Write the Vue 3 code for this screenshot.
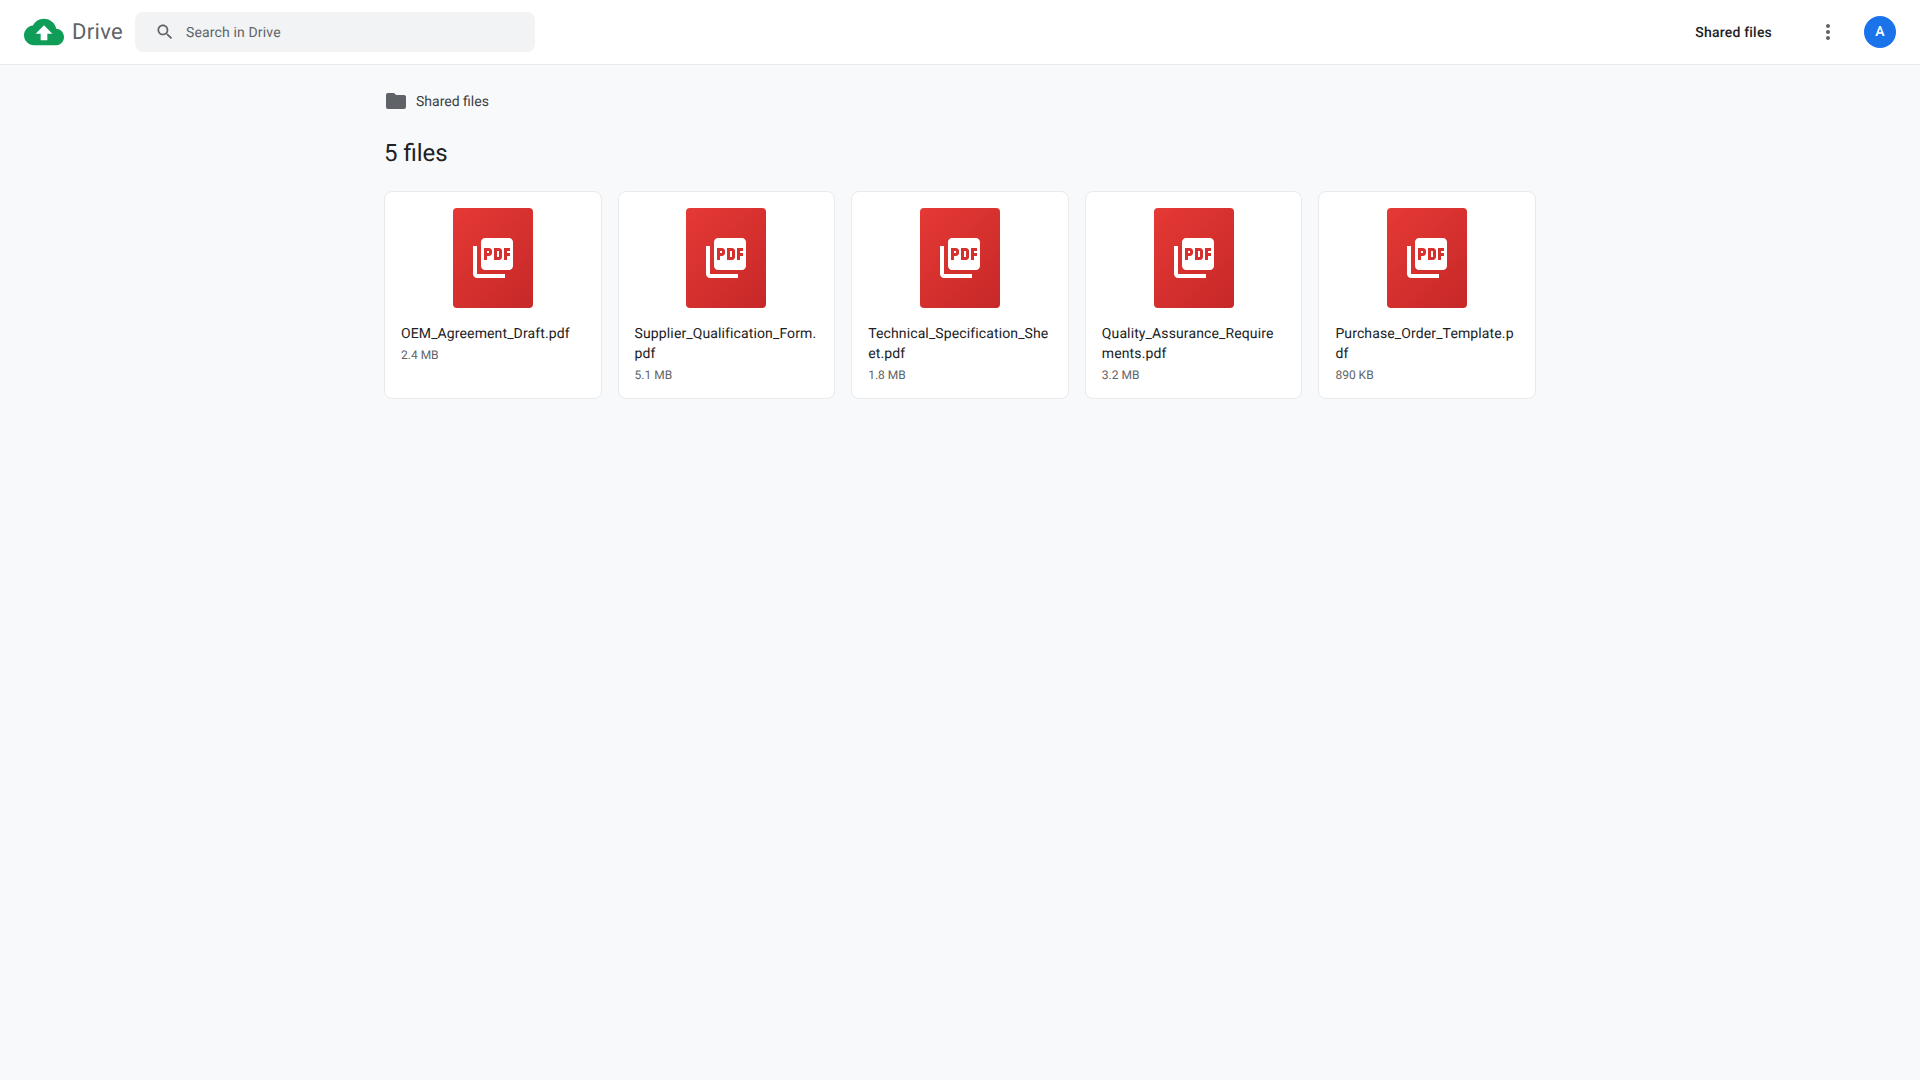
<template>
  <div class="page">
    <header class="topbar">
      <div class="logo">
        <svg class="logo-cloud" viewBox="0 0 24 24" fill="#0f9d58">
          <path d="M19.35 10.04C18.67 6.59 15.64 4 12 4 9.11 4 6.6 5.64 5.35 8.04 2.34 8.36 0 10.91 0 14c0 3.31 2.69 6 6 6h13c2.76 0 5-2.24 5-5 0-2.64-2.05-4.78-4.65-4.96zM14 13v4h-4v-4H7l5-5 5 5h-3z"/>
        </svg>
        <span class="logo-text">Drive</span>
      </div>
      <div class="search">
        <svg class="search-icon" viewBox="0 0 24 24" fill="#5f6368">
          <path d="M15.5 14h-.79l-.28-.27C15.41 12.59 16 11.11 16 9.5 16 5.91 13.09 3 9.5 3S3 5.91 3 9.5 5.91 16 9.5 16c1.61 0 3.09-.59 4.23-1.57l.27.28v.79l5 4.99L20.49 19l-4.99-5zm-6 0C7.01 14 5 11.99 5 9.5S7.01 5 9.5 5 14 7.01 14 9.5 11.99 14 9.5 14z"/>
        </svg>
        <span class="search-text">Search in Drive</span>
      </div>
      <div class="topbar-right">
        <span class="shared-link">Shared files</span>
        <button class="icon-btn">
          <svg viewBox="0 0 24 24" width="24" height="24" fill="#5f6368">
            <path d="M12 8c1.1 0 2-.9 2-2s-.9-2-2-2-2 .9-2 2 .9 2 2 2zm0 2c-1.1 0-2 .9-2 2s.9 2 2 2 2-.9 2-2-.9-2-2-2zm0 6c-1.1 0-2 .9-2 2s.9 2 2 2 2-.9 2-2-.9-2-2-2z"/>
          </svg>
        </button>
        <div class="avatar">A</div>
      </div>
    </header>

    <main class="content">
      <div class="breadcrumb">
        <svg viewBox="0 0 24 24" width="24" height="24" fill="#5f6368">
          <path d="M10 4H4c-1.1 0-1.99.9-1.99 2L2 18c0 1.1.9 2 2 2h16c1.1 0 2-.9 2-2V8c0-1.1-.9-2-2-2h-8l-2-2z"/>
        </svg>
        <span class="crumb-text">Shared files</span>
      </div>
      <h1 class="title">{{ files.length }} files</h1>
      <div class="grid">
        <div v-for="file in files" :key="file.name" class="card">
          <div class="thumb">
            <svg viewBox="0 0 24 24" width="48" height="48" fill="#fff">
              <path d="M20 2H8c-1.1 0-2 .9-2 2v12c0 1.1.9 2 2 2h12c1.1 0 2-.9 2-2V4c0-1.1-.9-2-2-2zm-8.5 7.5c0 .83-.67 1.5-1.5 1.5H9v2H7.5V7H10c.83 0 1.5.67 1.5 1.5v1zm5 2c0 .83-.67 1.5-1.5 1.5h-2.5V7H15c.83 0 1.5.67 1.5 1.5v3zm4-3H19v1h1.5V11H19v2h-1.5V7h3v1.5zM9 9.5h1v-1H9v1zM4 6H2v14c0 1.1.9 2 2 2h14v-2H4V6zm10 5.5h1v-3h-1v3z"/>
            </svg>
          </div>
          <div class="file-name">{{ file.name }}</div>
          <div class="file-size">{{ file.size }}</div>
        </div>
      </div>
    </main>
  </div>
</template>

<script setup>
const files = [
  { name: 'OEM_Agreement_Draft.pdf', size: '2.4 MB' },
  { name: 'Supplier_Qualification_Form.pdf', size: '5.1 MB' },
  { name: 'Technical_Specification_Sheet.pdf', size: '1.8 MB' },
  { name: 'Quality_Assurance_Requirements.pdf', size: '3.2 MB' },
  { name: 'Purchase_Order_Template.pdf', size: '890 KB' }
];
</script>

<style>
body {
  background: #f8f9fa;
}
</style>

<style scoped>
.page {
  min-height: 100vh;
  background: #f8f9fa;
  font-family: Roboto, "Liberation Sans", sans-serif;
  font-variant-ligatures: common-ligatures;
  color: #202124;
  text-rendering: geometricPrecision;
}

.topbar {
  display: flex;
  align-items: center;
  height: 64px;
  padding: 0 24px;
  background: #fff;
  border-bottom: 1px solid #e8eaed;
}

.logo {
  display: flex;
  align-items: center;
  gap: 8px;
  margin-right: 12px;
}

.logo-cloud {
  width: 40px;
  height: 40px;
}

.logo-text {
  font-size: 22px;
  letter-spacing: 0.3px;
  color: #5f6368;
}

.search {
  display: flex;
  align-items: center;
  gap: 11px;
  width: 400px;
  height: 40px;
  padding: 0 20px;
  box-sizing: border-box;
  background: #f1f3f4;
  border-radius: 8px;
  font-size: 14px;
  color: #5f6368;
}

.search-icon {
  width: 20px;
  height: 20px;
}

.search-text {
  padding-top: 1px;
  letter-spacing: 0.15px;
}

.topbar-right {
  display: flex;
  align-items: center;
  margin-left: auto;
}

.shared-link {
  padding-top: 1px;
  font-size: 14px;
  font-weight: 500;
  letter-spacing: 0.2px;
  color: #202124;
  margin-right: 36px;
}

.icon-btn {
  display: flex;
  align-items: center;
  justify-content: center;
  width: 40px;
  height: 40px;
  padding: 0;
  border: none;
  background: none;
  margin-right: 16px;
}

.avatar {
  display: flex;
  align-items: center;
  justify-content: center;
  width: 32px;
  height: 32px;
  border-radius: 50%;
  background: #1a73e8;
  color: #fff;
  font-size: 14px;
  font-weight: 500;
}

.content {
  max-width: 1152px;
  margin: 0 auto;
  padding: 24px 24px;
}

.breadcrumb {
  display: flex;
  align-items: center;
  gap: 8px;
  font-size: 14px;
  color: #3c4043;
}

.crumb-text {
  padding-top: 1px;
}

.title {
  margin: 24px 0 22px;
  font-size: 24px;
  font-weight: 400;
  line-height: 32px;
  color: #202124;
}

.grid {
  display: grid;
  grid-template-columns: repeat(5, 1fr);
  gap: 16px;
}

.card {
  padding: 16px;
  background: #fff;
  border: 1px solid #e8eaed;
  border-radius: 8px;
}

.thumb {
  display: flex;
  align-items: center;
  justify-content: center;
  width: 80px;
  height: 100px;
  margin: 0 auto 16px;
  border-radius: 4px;
  background: linear-gradient(135deg, #e53935, #c62828);
}

.file-name {
  font-size: 14px;
  line-height: 20px;
  letter-spacing: 0.12px;
  color: #202124;
  word-break: break-all;
}

.file-size {
  margin-top: 4px;
  font-size: 12px;
  color: #5f6368;
}
</style>
